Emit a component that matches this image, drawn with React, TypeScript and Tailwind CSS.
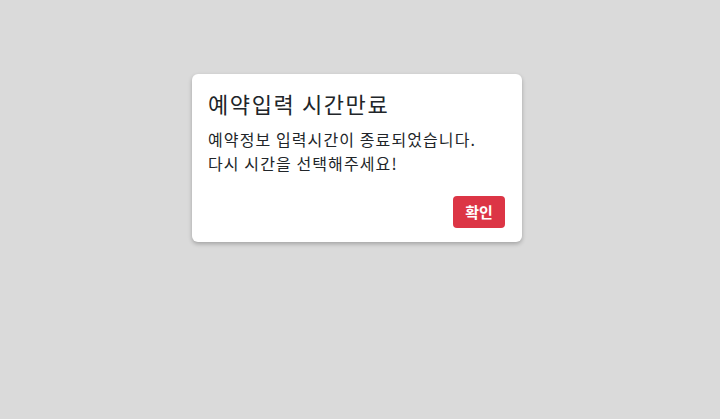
export default function App() {
  return (
    <div className="h-[419px] w-[720px] bg-[#dadada] pl-[192px] pt-[74px] font-['Noto_Sans_CJK_KR',sans-serif] text-[#212529]">
      <div className="h-[168px] w-[330px] rounded-md bg-white px-4 pt-[14px] shadow-[0_2px_4px_rgba(0,0,0,0.25)]">
        <h2 className="text-[22px] leading-[30px] tracking-[1.6px]">예약입력 시간만료</h2>
        <p className="mt-[9px] text-[16px] leading-6 tracking-[1.1px]">
          예약정보 입력시간이 종료되었습니다.
          <br />
          다시 시간을 선택해주세요!
        </p>
        <div className="mt-[21px] flex justify-end pr-px">
          <button className="h-8 w-[52px] rounded bg-[#dc3545] text-[15px] font-bold text-white">확인</button>
        </div>
      </div>
    </div>
  )
}
